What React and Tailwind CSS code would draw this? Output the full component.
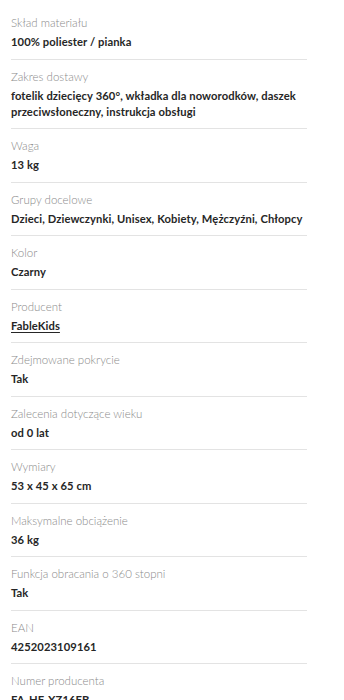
import React from "react";

const rows = [
  ["Skład materiału", "100% poliester / pianka"],
  ["Zakres dostawy", "fotelik dziecięcy 360°, wkładka dla noworodków, daszek przeciwsłoneczny, instrukcja obsługi"],
  ["Waga", "13 kg"],
  ["Grupy docelowe", "Dzieci, Dziewczynki, Unisex, Kobiety, Mężczyźni, Chłopcy"],
  ["Kolor", "Czarny"],
  ["Producent", "FableKids", true],
  ["Zdejmowane pokrycie", "Tak"],
  ["Zalecenia dotyczące wieku", "od 0 lat"],
  ["Wymiary", "53 x 45 x 65 cm"],
  ["Maksymalne obciążenie", "36 kg"],
  ["Funkcja obracania o 360 stopni", "Tak"],
  ["EAN", "4252023109161"],
  ["Numer producenta", "FA-HF-XZ16FB"],
];

export default function App() {
  return (
    <div className="bg-white w-[344px] h-[700px] overflow-hidden pt-[6px] pl-[11px]" style={{ fontFamily: "Lato, 'Noto Sans', sans-serif" }}>
      <div className="w-[296px]">
        {rows.map(([label, value, link], i) => (
          <div key={i} className={"pt-2 pb-[8.5px] " + (i < rows.length - 1 ? "border-b border-[#e3e3e3]" : "")}>
            <div className="text-[11.5px] leading-[18px] font-light text-[#8a8a8a]">{label}</div>
            <div className={"mt-[2px] text-[11.2px] leading-[16px] font-bold text-[#262626] tracking-[0.1px] " + (link ? "underline underline-offset-2" : "")}>{value}</div>
          </div>
        ))}
      </div>
    </div>
  );
}
